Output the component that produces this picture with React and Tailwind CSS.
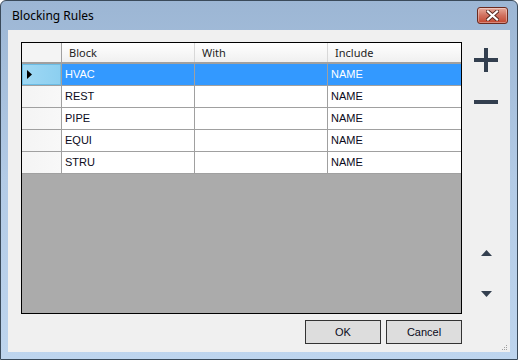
import React from "react";

const rows = ["HVAC", "REST", "PIPE", "EQUI", "STRU"];

function CloseButton() {
  return (
    <div className="flex h-[17px] w-[31px] items-center justify-center rounded-[3px] border border-[#6b2a1f] bg-gradient-to-b from-[#e6a99b] via-[#d0705e] to-[#c2452f] shadow-[inset_0_0_0_1px_rgba(255,255,255,0.35)]">
      <svg width="13" height="11" viewBox="0 0 13 11">
        <path
          d="M2 1.5 L11 9.5 M11 1.5 L2 9.5"
          stroke="#5a2a22"
          strokeWidth="4"
          strokeLinecap="square"
        />
        <path
          d="M2 1.5 L11 9.5 M11 1.5 L2 9.5"
          stroke="#ffffff"
          strokeWidth="2.2"
          strokeLinecap="square"
        />
      </svg>
    </div>
  );
}

function Grid() {
  return (
    <div className="flex h-[272px] w-[441px] flex-col border border-black bg-[#ababab]">
      {/* header row */}
      <div className="flex h-[21px] border-b-2 border-[#a0a0a0] bg-gradient-to-b from-[#ffffff] to-[#f0f0f0] font-['Noto_Sans',sans-serif] text-[11px] text-[#1e1e1e]">
        <div className="w-[40px] border-r border-[#a0a0a0] bg-[#f4f4f4]" />
        {["Block", "With", "Include"].map((h) => (
          <div
            key={h}
            className="flex w-[133px] items-center border-r border-[#d8d8d8] pl-[7px] leading-none last:border-r-0"
          >
            {h}
          </div>
        ))}
      </div>
      {rows.map((r, i) => {
        const sel = i === 0;
        return (
          <div
            key={r}
            className="flex h-[22px] border-b border-[#a0a0a0] font-['Liberation_Sans',sans-serif] text-[11px]"
          >
            <div
              className={
                sel
                  ? "flex w-[40px] items-center border-r border-[#a0a0a0] bg-gradient-to-r from-[#9fd8f4] to-[#8ccff0] pl-[5px] shadow-[inset_0_0_0_1px_#6bbde6]"
                  : "w-[40px] border-r border-[#a0a0a0] bg-gradient-to-r from-[#f4f4f4] to-[#f8f8f8]"
              }
            >
              {sel && (
                <svg width="5" height="9" viewBox="0 0 5 9">
                  <path d="M0 0 L5 4.5 L0 9 Z" fill="#000" />
                </svg>
              )}
            </div>
            <div
              className={
                (sel ? "bg-[#3399ff] text-white" : "bg-white text-[#0a0a1a]") +
                " flex w-[133px] items-center border-r border-[#a0a0a0] pl-[3px]"
              }
            >
              {r}
            </div>
            <div
              className={
                (sel ? "bg-[#3399ff]" : "bg-white") +
                " w-[133px] border-r border-[#a0a0a0]"
              }
            />
            <div
              className={
                (sel ? "bg-[#3399ff] text-white" : "bg-white text-[#0a0a1a]") +
                " flex w-[133px] items-center pl-[3px]"
              }
            >
              NAME
            </div>
          </div>
        );
      })}
    </div>
  );
}

function SideButtons() {
  return (
    <div className="relative flex w-[48px] flex-col items-center">
      <svg width="24" height="24" viewBox="0 0 24 24" className="mt-[6px]">
        <rect x="0" y="10" width="24" height="4" fill="#333f4f" />
        <rect x="10" y="0" width="4" height="24" fill="#333f4f" />
      </svg>
      <svg width="24" height="4" viewBox="0 0 24 4" className="mt-[28px]">
        <rect x="0" y="0" width="24" height="4" fill="#333f4f" />
      </svg>
      <svg width="11" height="6" viewBox="0 0 11 6" className="mt-[146px]">
        <path d="M5.5 0 L11 6 L0 6 Z" fill="#333f4f" />
      </svg>
      <svg width="11" height="6" viewBox="0 0 11 6" className="mt-[35px]">
        <path d="M0 0 L11 0 L5.5 6 Z" fill="#333f4f" />
      </svg>
    </div>
  );
}

function Button({ children }) {
  return (
    <button className="flex h-[24px] w-[76px] items-center justify-center border border-[#333] bg-[#dddddd] font-['Liberation_Sans',sans-serif] text-[11px] leading-none text-[#0a0a1a]">
      {children}
    </button>
  );
}

export default function App() {
  return (
    <div className="flex h-[360px] w-[518px] flex-col overflow-hidden rounded-t-[6px] border border-[#3a4a5a] bg-gradient-to-b from-[#9cb6d4] via-[#b3cbe6] to-[#bed5ee]">
      {/* title bar */}
      <div className="flex h-[29px] items-center justify-between pl-[11px] pr-[9px]">
        <span className="font-['Noto_Sans',sans-serif] text-[12px] text-black">
          Blocking Rules
        </span>
        <div className="mt-[-1px]">
          <CloseButton />
        </div>
      </div>
      {/* client */}
      <div className="mx-[7px] mb-[7px] flex flex-1 flex-col bg-[#f0f0f0] pl-[13px] pt-[12px]">
        <div className="flex">
          <Grid />
          <SideButtons />
        </div>
        <div className="mt-[6px] flex justify-end gap-[5px] pr-[48px]">
          <Button>OK</Button>
          <Button>Cancel</Button>
        </div>
        <div className="relative flex-1">
          <svg width="7" height="7" viewBox="0 0 7 7" className="absolute bottom-[1px] right-[2px]">
            {[
              [5, 0],
              [5, 2],
              [3, 2],
              [5, 4],
              [3, 4],
              [1, 4],
            ].map(([x, y]) => (
              <rect key={x + "-" + y} x={x} y={y + 1} width="1" height="1" fill="#a0a0a0" />
            ))}
          </svg>
        </div>
      </div>
    </div>
  );
}
